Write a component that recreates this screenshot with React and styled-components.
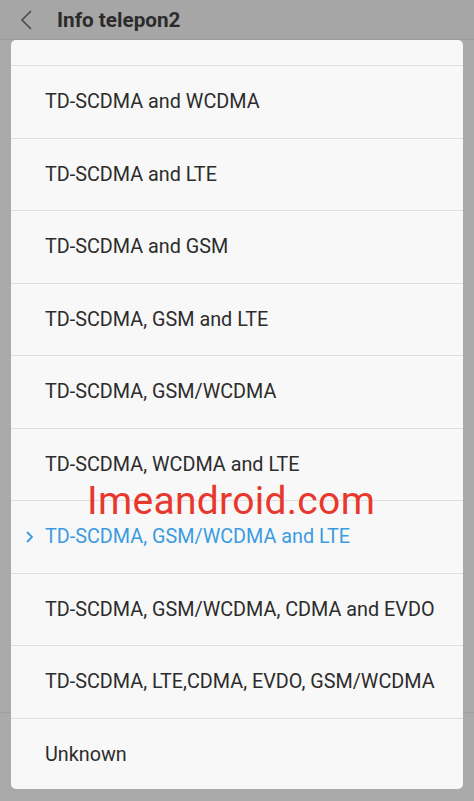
import React from "react";
import styled, { createGlobalStyle } from "styled-components";

const Global = createGlobalStyle`
  html, body {
    margin: 0;
    padding: 0;
    background: #a9a9a9;
    font-family: Roboto, "Noto Sans", "Liberation Sans", sans-serif;
  }
`;

const Screen = styled.div`
  position: relative;
  width: 474px;
  height: 801px;
  overflow: hidden;
  background: #aaaaaa;
`;

const Header = styled.div`
  height: 40px;
  display: flex;
  align-items: center;
  background: #a6a6a6;
  border-bottom: 1px solid #9c9c9c;
  box-sizing: border-box;
`;

const Back = styled.div`
  width: 57px;
  display: flex;
  justify-content: center;
  padding-right: 6px;
  box-sizing: border-box;
`;

const Title = styled.h1`
  margin: 0;
  font-size: 20.7px;
  font-weight: 700;
  color: #2b2b2b;
`;

const BackRow = styled.div`
  height: 672px;
  border-bottom: 1px solid #9f9f9f;
`;

const Dialog = styled.div`
  position: absolute;
  left: 11px;
  right: 11px;
  top: 40px;
  height: 749px;
  background: #f8f8f8;
  border-radius: 5px;
  overflow: hidden;
`;

const List = styled.div`
  margin-top: -47.5px;
`;

const Item = styled.div`
  height: 72.5px;
  box-sizing: border-box;
  display: flex;
  align-items: center;
  gap: 7px;
  padding-left: ${(p) => (p.$active ? "14px" : "34px")};
  font-size: 19.8px;
  color: ${(p) => (p.$active ? "#3b9be2" : "#2c2c2c")};
  border-top: ${(p) => (p.$first ? "none" : "1px solid #dedede")};
`;

const Watermark = styled.div`
  position: absolute;
  left: 87px;
  top: 478px;
  font-size: 39px;
  color: #e8382d;
  letter-spacing: 0.3px;
  pointer-events: none;
`;

const options = [
  "TD-SCDMA only",
  "TD-SCDMA and WCDMA",
  "TD-SCDMA and LTE",
  "TD-SCDMA and GSM",
  "TD-SCDMA, GSM and LTE",
  "TD-SCDMA, GSM/WCDMA",
  "TD-SCDMA, WCDMA and LTE",
  "TD-SCDMA, GSM/WCDMA and LTE",
  "TD-SCDMA, GSM/WCDMA, CDMA and EVDO",
  "TD-SCDMA, LTE,CDMA, EVDO, GSM/WCDMA",
  "Unknown",
];

const selected = 7;

export default function App() {
  return (
    <Screen>
      <Global />
      <Header>
        <Back>
          <svg width="14" height="22" viewBox="0 0 14 22">
            <path d="M12 2 L3 11 L12 20" fill="none" stroke="#4a4a4a" strokeWidth="1.6" />
          </svg>
        </Back>
        <Title>Info telepon2</Title>
      </Header>
      <BackRow />
      <Dialog>
        <List>
          {options.map((o, i) => (
            <Item key={o} $first={i === 0} $active={i === selected}>
              {i === selected && (
                <svg width="13" height="14" viewBox="0 0 13 14">
                  <path d="M2 2 L7 7 L2 12" fill="none" stroke="#3b9be2" strokeWidth="1.8" />
                </svg>
              )}
              <span>{o}</span>
            </Item>
          ))}
        </List>
      </Dialog>
      <Watermark>Imeandroid.com</Watermark>
    </Screen>
  );
}
